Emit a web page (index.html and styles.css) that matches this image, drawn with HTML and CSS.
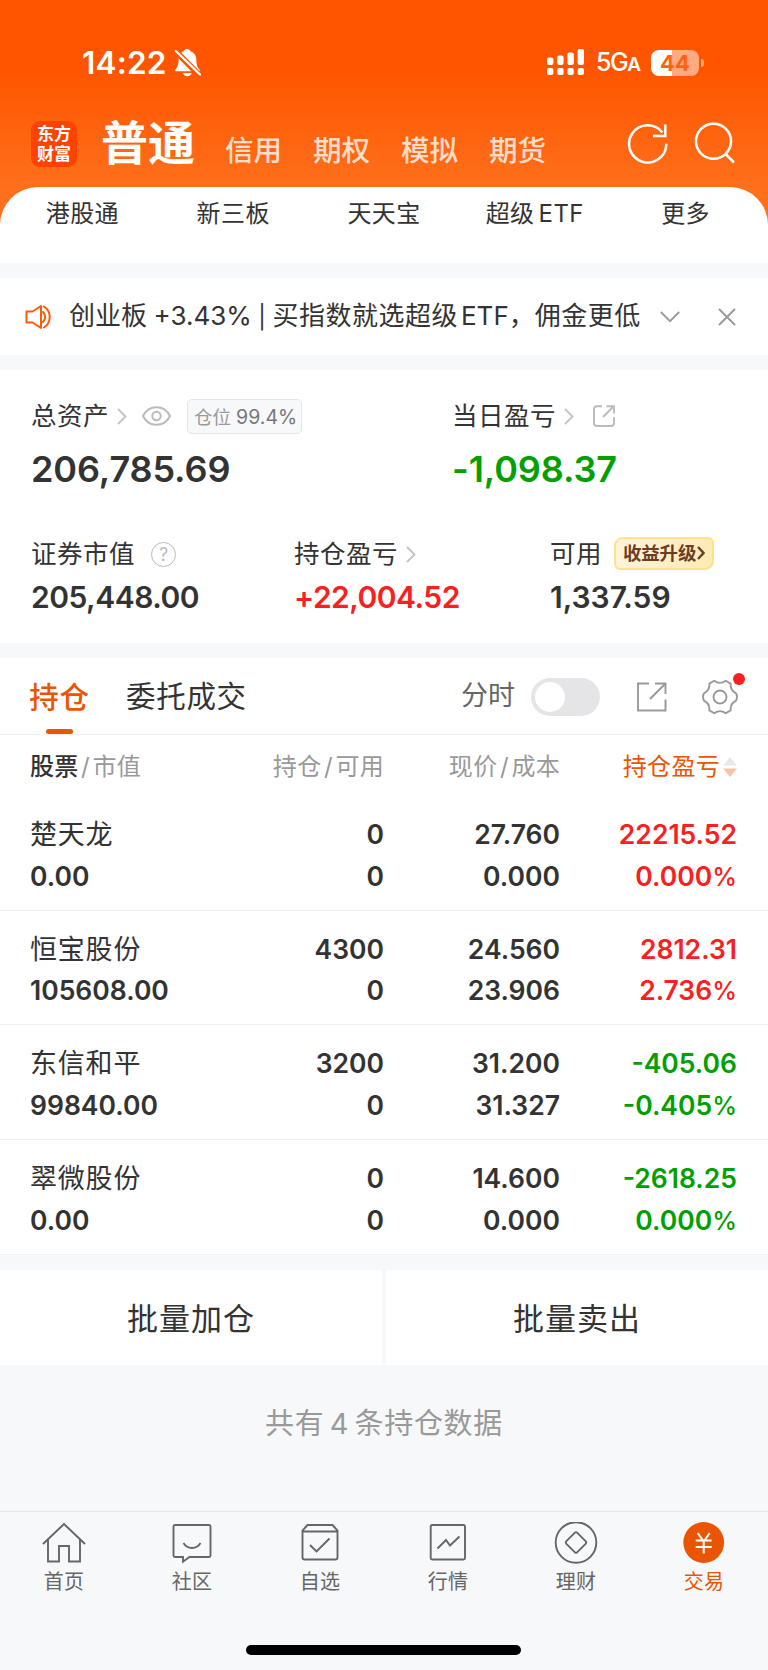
FILE: index.html
```html
<!DOCTYPE html>
<html lang="zh-CN">
<head>
    <meta charset="UTF-8">
    <meta name="viewport" content="width=device-width, initial-scale=1.0">
    <title>东方财富 - 交易</title>
    <link rel="stylesheet" href="styles.css">
</head>
<body>
    <div class="header">
        <div class="status-bar">
            <span class="time">14:22</span>
            <svg class="bell" width="28" height="30" viewBox="0 0 28 30">
                <path d="M13 1c2 0 3 1 3.300 2.200c4 1.300 6 4.600 6 8.800c0 5 1.400 7.400 3.200 9.500c.6.900.3 1.800-.8 1.800H2.300c-1.100 0-1.500-1-.8-1.900C3.400 19.200 4.600 17 4.600 12c0-4.200 2-7.500 5.200-8.800C10.200 2 11.200 1 13 1z" fill="#fff"/>
                <path d="M9 25h8.600c-.5 2-2 3.200-4.300 3.200S9.500 27 9 25z" fill="#fff"/>
                <path d="M0 1.500L26 28" stroke="#ff5500" stroke-width="6"/>
                <path d="M1.800 3L26 26.500" stroke="#fff" stroke-width="2.200" stroke-linecap="round"/>
            </svg>
            <svg class="signal" width="38" height="27" viewBox="0 0 38 27" fill="#fff">
                <rect x="0" y="8.500" width="6.400" height="7.500" rx="2"/>
                <rect x="10.200" y="6.500" width="6.400" height="9.500" rx="2"/>
                <rect x="20.400" y="3.500" width="6.400" height="12.500" rx="2"/>
                <rect x="30.600" y="0" width="6.400" height="16" rx="2"/>
                <rect x="0" y="19" width="6.400" height="7" rx="2"/>
                <rect x="10.200" y="19" width="6.400" height="7" rx="2"/>
                <rect x="20.400" y="19" width="6.400" height="7" rx="2"/>
                <rect x="30.600" y="19" width="6.400" height="7" rx="2"/>
            </svg>
            <span class="network">5G<small>A</small></span>
            <span class="battery">44</span>
            <span class="battery-tip"></span>
        </div>
        <div class="account-bar">
            <div class="logo">东方<br>财富</div>
            <span class="account active">普通</span>
            <span class="account">信用</span>
            <span class="account">期权</span>
            <span class="account">模拟</span>
            <span class="account">期货</span>
            <svg class="refresh" width="42" height="42" viewBox="0 0 42 42" fill="none" stroke="#fff" stroke-width="2.500">
                <path d="M39.300 21.700A18.600 18.600 0 1 1 35.400 10.500"/>
                <path d="M38.300 2.500V14H26"/>
            </svg>
            <svg class="search" width="42" height="42" viewBox="0 0 42 42" fill="none" stroke="#fff" stroke-width="2.500">
                <circle cx="19.500" cy="19.300" r="17.500"/>
                <path d="M31 31.500l9 9"/>
            </svg>
        </div>
    </div>

    <div class="shortcuts">
        <span>港股通</span>
        <span>新三板</span>
        <span>天天宝</span>
        <span class="latin">超级 ETF</span>
        <span>更多</span>
    </div>

    <div class="notice">
        <svg width="28" height="26" viewBox="0 0 28 26" fill="none" stroke="#ff5a0a" stroke-width="2" stroke-linejoin="round">
            <path d="M1.500 7.500h6L16 2v22l-8.500-5.500h-6z"/>
            <path d="M18 8a7 7 0 0 1 0 10M19 2.500a12.500 12.500 0 0 1 0 21" stroke-linecap="round"/>
        </svg>
        <span class="notice-text"><span class="notice-rate">创业板 +3.43% <i>|</i> </span><span class="notice-cjk">买指数就选超级</span><span class="etf">ETF</span>，<span class="notice-end">佣金更低</span></span>
        <svg class="notice-down" width="20" height="12" viewBox="0 0 20 12" fill="none" stroke="#999" stroke-width="1.900"><path d="M.8 1l9.200 9.200L19.200 1"/></svg>
        <svg class="notice-close" width="18" height="18" viewBox="0 0 18 18" fill="none" stroke="#999" stroke-width="1.900"><path d="M1 1l16 16M17 1L1 17"/></svg>
    </div>

    <div class="assets">
        <div class="asset-row">
            <div class="asset total">
                <div class="label">总资产
                    <svg class="arrow" width="10" height="17" viewBox="0 0 10 17"><path d="M1 1l7.500 7.500L1 16"/></svg>
                    <svg class="eye" width="29" height="20" viewBox="0 0 29 20" fill="none" stroke="#bbb" stroke-width="2">
                        <path d="M1 10C4 4 9 1.200 14.500 1.200S25 4 28 10c-3 6-8 8.800-13.500 8.800S4 16 1 10z"/>
                        <circle cx="14.500" cy="10" r="4.200"/>
                    </svg>
                    <span class="position">仓位 <b>99.4%</b></span>
                </div>
                <div class="big">206,785.69</div>
            </div>
            <div class="asset">
                <div class="label">当日盈亏
                    <svg class="arrow" width="10" height="17" viewBox="0 0 10 17"><path d="M1 1l7.500 7.500L1 16"/></svg>
                    <svg class="share" width="22" height="22" viewBox="0 0 22 22" fill="none" stroke="#bbb" stroke-width="1.900">
                        <path d="M9 1.200H4a3 3 0 0 0-3 3V18a3 3 0 0 0 3 3h14a3 3 0 0 0 3-3v-6M10 12L20.500 1.500M13.500 1.200H21V8.500"/>
                    </svg>
                </div>
                <div class="big down">-1,098.37</div>
            </div>
        </div>
        <div class="asset-row second">
            <div class="asset market">
                <div class="label">证券市值
                    <span class="help">?</span>
                </div>
                <div class="value tight">205,448.00</div>
            </div>
            <div class="asset profit">
                <div class="label">持仓盈亏
                    <svg class="arrow" width="10" height="17" viewBox="0 0 10 17"><path d="M1 1l7.500 7.500L1 16"/></svg>
                </div>
                <div class="value tight up">+22,004.52</div>
            </div>
            <div class="asset">
                <div class="label">可用
                    <span class="upgrade">收益升级<svg width="8" height="14" viewBox="0 0 8 14" fill="none" stroke="#6b3d22" stroke-width="2.400"><path d="M1 1l5.500 6L1 13"/></svg></span>
                </div>
                <div class="value">1,337.59</div>
            </div>
        </div>
    </div>

    <div class="holdings">
        <div class="tabs">
            <span class="tab active">持仓</span>
            <span class="tab">委托成交</span>
            <span class="minute">分时</span>
            <span class="toggle"></span>
            <svg class="open" width="30" height="30" viewBox="0 0 30 30" fill="none" stroke="#999" stroke-width="1.900">
                <path d="M12 1.500H1V28.500H28.500V17.500M13 17L28 2M18 1.500H28.500V12"/>
            </svg>
            <span class="settings">
                <svg width="36" height="36" viewBox="0 0 36 36" fill="none" stroke="#999" stroke-width="1.900" stroke-linejoin="round">
                    <path d="M12.200 1.800Q18 6 23.800 1.800L28.600 4.600Q28.200 11.500 34 14.300Q36 18 34 21.700Q28.200 24.500 28.600 31.400L23.800 34.200Q18 30 12.200 34.200L7.400 31.400Q7.800 24.500 2 21.700Q0 18 2 14.300Q7.800 11.500 7.400 4.600z"/>
                    <circle cx="18" cy="18" r="6.500"/>
                </svg>
                <i class="dot"></i>
            </span>
        </div>
        <div class="row table-head">
            <span><b>股票</b><i>/</i>市值</span>
            <span>持仓<i>/</i>可用</span>
            <span>现价<i>/</i>成本</span>
            <span class="sorted">持仓盈亏<svg width="14" height="20" viewBox="0 0 14 20"><path d="M7 0l7 8.500H0z" fill="#e8e8e8"/><path d="M7 20l7-8.500H0z" fill="#f9c3a8"/></svg></span>
        </div>
        <div class="row stock">
            <div><span class="name">楚天龙</span><span>0.00</span></div>
            <div><span>0</span><span>0</span></div>
            <div><span>27.760</span><span>0.000</span></div>
            <div class="up"><span>22215.52</span><span>0.000<em>%</em></span></div>
        </div>
        <div class="row stock">
            <div><span class="name">恒宝股份</span><span>105608.00</span></div>
            <div><span>4300</span><span>0</span></div>
            <div><span>24.560</span><span>23.906</span></div>
            <div class="up"><span>2812.31</span><span>2.736<em>%</em></span></div>
        </div>
        <div class="row stock">
            <div><span class="name">东信和平</span><span>99840.00</span></div>
            <div><span>3200</span><span>0</span></div>
            <div><span>31.200</span><span>31.327</span></div>
            <div class="down"><span>-405.06</span><span>-0.405<em>%</em></span></div>
        </div>
        <div class="row stock">
            <div><span class="name">翠微股份</span><span>0.00</span></div>
            <div><span>0</span><span>0</span></div>
            <div><span>14.600</span><span>0.000</span></div>
            <div class="down"><span>-2618.25</span><span>0.000<em>%</em></span></div>
        </div>
    </div>

    <div class="batch">
        <div>批量加仓</div>
        <div>批量卖出</div>
    </div>

    <div class="count">共有 4 条持仓数据</div>

    <div class="tabbar">
        <div class="tab-item">
            <svg width="44" height="44" viewBox="0 0 44 44"><path d="M1 22L22 2l21 20M6 18v21.500h11V24h10v15.500h11V18"/></svg>
            <span>首页</span>
        </div>
        <div class="tab-item">
            <svg width="44" height="44" viewBox="0 0 44 44"><path d="M5 3h34q1.500 0 1.500 1.500v29q0 1.500-1.500 1.500H19.500L13 39.700V35H5q-1.500 0-1.500-1.500v-29Q3.500 3 5 3zM13.500 21Q16.500 26 22 26t8.500-5"/></svg>
            <span>社区</span>
        </div>
        <div class="tab-item">
            <svg width="44" height="44" viewBox="0 0 44 44"><path d="M9.500 3h25l5 5.500V35.500q0 2-2 2h-31q-2 0-2-2V8.500zM4.500 9.500h35M12 23l6.500 6.500L31.500 16.500"/></svg>
            <span>自选</span>
        </div>
        <div class="tab-item">
            <svg width="44" height="44" viewBox="0 0 44 44"><rect x="4.700" y="3" width="34.300" height="34.500" rx="1.500"/><path d="M11.500 26.500l8.500-8.500 4 5.500 9.500-9"/></svg>
            <span>行情</span>
        </div>
        <div class="tab-item">
            <svg width="44" height="44" viewBox="0 0 44 44"><circle cx="22" cy="20.500" r="20.300"/><rect x="14.300" y="12.800" width="15.400" height="15.400" rx="1.500" transform="rotate(45 22 20.500)"/></svg>
            <span>理财</span>
        </div>
        <div class="tab-item active">
            <svg width="44" height="44" viewBox="0 0 44 44"><circle class="coin" cx="21.700" cy="20.500" r="20.400"/><path class="yen" d="M15.700 11l6 8.500 6-8.500M21.700 19v12.500M13.700 18.500h16M13.700 25h16"/></svg>
            <span>交易</span>
        </div>
    </div>
    <div class="home-indicator"></div>
</body>
</html>
```

FILE: styles.css
```css
* {
    box-sizing: border-box;
}

body {
    margin: 0;
    width: 768px;
    height: 1670px;
    overflow: hidden;
    background-color: #f7f8fa;
    color: #333;
    font-family: Inter, "Noto Sans CJK SC", sans-serif;
    font-size: 26px;
}

svg {
    display: block;
    flex: none;
}

span {
    white-space: nowrap;
}

i, em {
    font-style: normal;
}

.up {
    color: #fa2020;
}

.down {
    color: #00a000;
}

/* Orange header */
.header {
    height: 240px;
    background: linear-gradient(#ff5500 0, #ff5500 70px, #ff701c 190px);
    color: #fff;
}

.status-bar {
    display: flex;
    align-items: center;
    height: 102px;
    padding: 23px 0 0 82px;
}

.time {
    width: 84px;
    font-size: 31.500px;
    font-weight: 600;
    letter-spacing: 0.2px;
}

.bell {
    margin-left: 8px;
}

.signal {
    margin-left: 345px;
}

.network {
    margin-left: 11px;
    width: 55px;
    font-size: 25px;
    font-weight: 500;
    line-height: 30px;
    letter-spacing: -1.5px;
    padding-top: 2px;
}

.network small {
    font-size: 19px;
    font-weight: 600;
}

.battery {
    width: 48px;
    height: 26px;
    border-radius: 8px;
    background: linear-gradient(90deg, #fff 21px, rgba(255, 255, 255, 0.5) 21px);
    color: #ff6210;
    font-size: 22px;
    font-weight: 700;
    line-height: 27px;
    text-align: center;
}

.battery-tip {
    width: 3px;
    height: 8px;
    margin-left: 2px;
    border-radius: 0 4px 4px 0;
    background-color: rgba(255, 255, 255, 0.5);
}

.account-bar {
    display: flex;
    align-items: center;
    height: 84px;
    padding-left: 31px;
}

.logo {
    width: 46px;
    height: 46px;
    margin-right: 24px;
    padding: 3px 0 0 6px;
    border-radius: 9px;
    background-color: #ff4200;
    font-size: 17px;
    font-weight: 700;
    line-height: 20px;
}

.account {
    width: 88px;
    padding-top: 13px;
    font-size: 28.500px;
    font-weight: 500;
    line-height: 30px;
    color: rgba(255, 255, 255, 0.8);
}

.account.active {
    width: 124px;
    padding: 0 0 2px;
    font-size: 47px;
    font-weight: 700;
    line-height: 50px;
    color: #fff;
}

.refresh {
    margin: -2px 0 0 50px;
}

.search {
    margin: -2px 0 0 25px;
}

/* White sheet over the header */
.shortcuts {
    display: flex;
    height: 76px;
    margin-top: -53px;
    padding: 0 7px;
    border-radius: 38px 38px 0 0;
    background-color: #fff;
    font-size: 24px;
    line-height: 53px;
    letter-spacing: 0.4px;
}

.shortcuts span {
    flex: 1;
    text-align: center;
}

.shortcuts .latin {
    word-spacing: -3px;
}

.notice {
    display: flex;
    align-items: center;
    height: 77px;
    margin-top: 15px;
    padding-left: 25px;
    background-color: #fff;
}

.notice-text {
    width: 580px;
    margin-left: 16px;
    font-size: 26px;
    line-height: 30px;
}

.notice-rate {
    word-spacing: -0.8px;
}

.notice-rate i {
    font-size: 23px;
}

.notice-cjk {
    letter-spacing: 0.5px;
}

.etf {
    margin-left: 3px;
}

.notice-end {
    letter-spacing: 0.5px;
}

.notice-down {
    margin-left: 11px;
}

.notice-close {
    margin-left: 38px;
}

/* Assets */
.assets {
    height: 273px;
    margin-top: 15px;
    padding: 27px 31px 0;
    background-color: #fff;
}

.asset-row {
    display: flex;
}

.asset-row.second {
    margin-top: 33px;
}

.total {
    width: 421px;
}

.market {
    width: 263px;
}

.profit {
    width: 256px;
}

.label {
    display: flex;
    align-items: center;
    height: 38px;
    font-size: 25.500px;
    line-height: 38px;
    letter-spacing: 0.5px;
    white-space: nowrap;
}

.arrow {
    margin-left: 8px;
    fill: none;
    stroke: #c4c4c4;
    stroke-width: 1.9;
}

.eye {
    margin-left: 15px;
}

.share {
    margin-left: 19px;
}

.position {
    width: 115px;
    height: 35px;
    margin-left: 16px;
    padding-left: 2px;
    border: 1.500px solid #e5e6ea;
    border-radius: 5px;
    background-color: #f7f8fa;
    color: #999;
    font-size: 18.500px;
    line-height: 34px;
    letter-spacing: 0;
    text-align: center;
}

.position b {
    color: #777;
    font-size: 19.500px;
    font-weight: 400;
}

.big {
    height: 66px;
    margin-top: 1px;
    font-size: 36px;
    font-weight: 600;
    line-height: 66px;
    letter-spacing: -0.1px;
}

.value {
    height: 48px;
    font-size: 30px;
    font-weight: 600;
    line-height: 48px;
}

.value.tight {
    letter-spacing: -0.5px;
}

.help {
    width: 25px;
    height: 25px;
    margin-left: 16px;
    border: 1.500px solid #bbb;
    border-radius: 50%;
    color: #bbb;
    font-size: 18px;
    line-height: 23px;
    letter-spacing: 0;
    text-align: center;
}

.upgrade {
    display: flex;
    align-items: center;
    width: 100px;
    height: 33px;
    margin: -2px 0 0 12px;
    padding-left: 7px;
    border: 2px solid #fbe38a;
    border-radius: 9px 6px 9px 6px;
    background: linear-gradient(90deg, #fdf3dc, #ffeab5);
    color: #6b3d22;
    font-size: 18.500px;
    font-weight: 700;
    letter-spacing: -0.2px;
}

.upgrade svg {
    margin-left: 1px;
}

/* Holdings */
.holdings {
    margin-top: 15px;
    background-color: #fff;
}

.tabs {
    display: flex;
    align-items: center;
    height: 77px;
    padding-left: 30px;
    border-bottom: 1px solid #f0f1f3;
}

.tab {
    font-size: 29.500px;
    line-height: 40px;
    letter-spacing: 0.7px;
}

.tab.active {
    display: flex;
    flex-direction: column;
    align-items: center;
    justify-content: space-between;
    width: 59px;
    height: 76px;
    margin-right: 37px;
    color: #ea5504;
    font-weight: 500;
    line-height: 78px;
}

.tab.active::after {
    content: "";
    flex: none;
    width: 27px;
    height: 5px;
    margin-top: -7px;
    border-radius: 3px;
    background-color: #ea5504;
}

.minute {
    width: 70px;
    margin-left: auto;
    color: #666;
    font-size: 27px;
    line-height: 40px;
}

.toggle {
    width: 69px;
    height: 38px;
    margin-top: 1px;
    padding: 4px;
    border-radius: 19px;
    background-color: #e5e5e7;
}

.toggle::before {
    content: "";
    display: block;
    width: 30px;
    height: 30px;
    border-radius: 50%;
    background-color: #fff;
}

.open {
    margin: 1px 0 0 37px;
}

.settings {
    position: relative;
    margin: 1px 30px 0 35px;
}

.dot {
    position: absolute;
    top: -6px;
    right: -7px;
    width: 12px;
    height: 12px;
    border-radius: 50%;
    background-color: #fa2020;
}

.row {
    display: grid;
    grid-template-columns: 214px 140px 176px 177px;
    padding-left: 30px;
    text-align: right;
}

.row > :first-child {
    text-align: left;
}

.table-head {
    height: 61px;
    color: #999;
    font-size: 24px;
    line-height: 64px;
    letter-spacing: 0.3px;
}

.table-head b {
    color: #333;
    font-weight: 500;
}

.table-head i {
    margin: 0 2.500px;
}

.table-head .sorted {
    display: flex;
    align-items: center;
    justify-content: flex-end;
    color: #ea5504;
}

.sorted svg {
    margin-left: 3px;
}

.stock {
    height: 114.700px;
    padding-top: 18px;
    border-bottom: 1px solid #f0f1f3;
    font-size: 26.500px;
    font-weight: 600;
}

.stock span {
    display: block;
    height: 41.500px;
    line-height: 41.500px;
}

.stock .name {
    font-size: 27px;
    font-weight: 400;
    letter-spacing: 0.8px;
}

.stock em {
    font-size: 25px;
    font-weight: 500;
}

.batch {
    display: flex;
    gap: 4px;
    height: 95px;
    margin-top: 15px;
}

.batch div {
    flex: 1;
    background-color: #fff;
    font-size: 31px;
    line-height: 97px;
    letter-spacing: 1px;
    text-align: center;
}

.count {
    height: 146px;
    padding-top: 39px;
    color: #999;
    font-size: 29px;
    line-height: 40px;
    letter-spacing: 0.7px;
    word-spacing: -3.500px;
    text-align: center;
}

/* Bottom navigation */
.tabbar {
    display: flex;
    height: 134px;
    border-top: 1px solid #e3e4e6;
}

.tab-item {
    flex: 1;
    display: flex;
    flex-direction: column;
    align-items: center;
    padding-top: 10px;
    color: #666;
    font-size: 20px;
    line-height: 32px;
    letter-spacing: 0.2px;
}

.tab-item svg {
    fill: none;
    stroke: #666;
    stroke-width: 1.9;
}

.tab-item.active {
    color: #ea5504;
}

.tab-item .coin {
    fill: #ea5504;
    stroke: none;
}

.tab-item .yen {
    stroke: #fff;
    stroke-width: 2;
}

.home-indicator {
    width: 275px;
    height: 10px;
    margin-left: 246px;
    border-radius: 5px;
    background-color: #000;
}
```
